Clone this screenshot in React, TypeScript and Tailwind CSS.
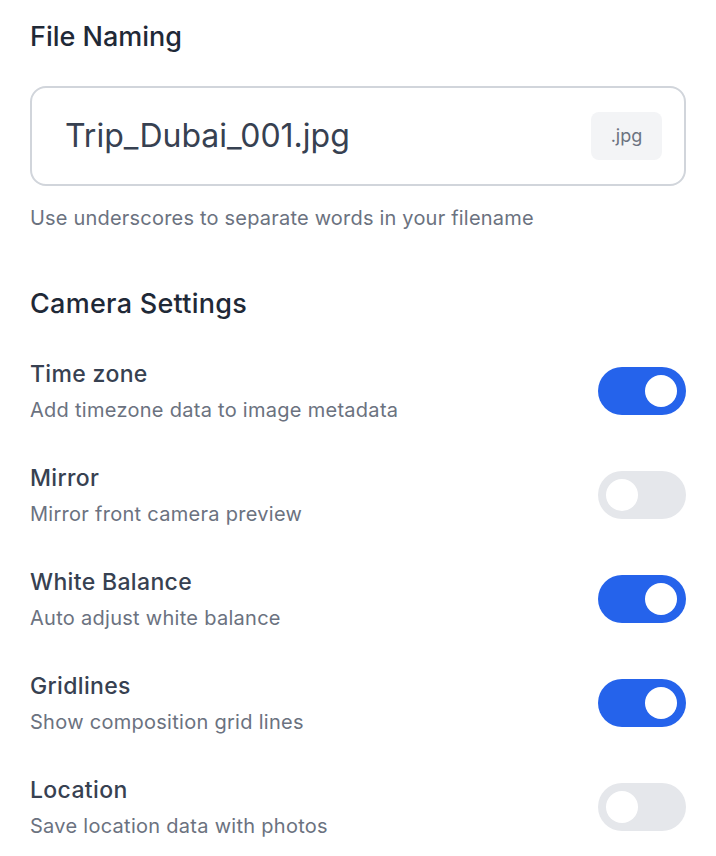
import React, { useState } from 'react';

interface Setting {
   id: string;
   title: string;
   description: string;
   enabled: boolean;
}

const initialSettings: Setting[] = [
   { id: 'timezone', title: 'Time zone', description: 'Add timezone data to image metadata', enabled: true },
   { id: 'mirror', title: 'Mirror', description: 'Mirror front camera preview', enabled: false },
   { id: 'wb', title: 'White Balance', description: 'Auto adjust white balance', enabled: true },
   { id: 'grid', title: 'Gridlines', description: 'Show composition grid lines', enabled: true },
   { id: 'location', title: 'Location', description: 'Save location data with photos', enabled: false },
];

const Toggle: React.FC<{ on: boolean; onClick: () => void }> = ({ on, onClick }) => (
   <button
      type="button"
      onClick={onClick}
      className={`relative w-[88px] h-12 shrink-0 rounded-full transition-colors ${on ? 'bg-[#2563eb]' : 'bg-[#e5e7eb]'}`}
   >
      <span
         className={`absolute top-2 left-2 w-8 h-8 rounded-full bg-white transition-transform ${on ? 'translate-x-[39px]' : 'translate-x-0'}`}
      />
   </button>
);

const App: React.FC = () => {
   const [name, setName] = useState('Trip_Dubai_001.jpg');
   const [settings, setSettings] = useState<Setting[]>(initialSettings);

   const toggle = (id: string) => {
      setSettings(prev => prev.map(s => (s.id === id ? { ...s, enabled: !s.enabled } : s)));
   };

   return (
      <div className="min-h-screen bg-white px-[30px] pt-[19px] font-['Inter',sans-serif]">
         {/* File naming */}
         <h2 className="text-[27px] leading-9 font-medium text-[#1f2937]">File Naming</h2>
         <div className="mt-[31px] flex items-center h-[100px] rounded-2xl border-2 border-[#d1d5db] pl-[33px] pr-[22px]">
            <input
               value={name}
               onChange={e => setName(e.target.value)}
               className="flex-1 min-w-0 bg-transparent outline-none text-[32px] text-[#374151]"
            />
            <span className="flex items-center justify-center w-[71px] h-12 rounded-lg bg-[#f3f4f6] text-lg text-[#6b7280]">
               .jpg
            </span>
         </div>
         <p className="mt-[18px] text-xl leading-7 tracking-[0.01em] text-[#6b7280]">Use underscores to separate words in your filename</p>

         {/* Camera settings */}
         <h2 className="mt-[54px] text-[27px] leading-9 font-medium tracking-[0.01em] text-[#1f2937]">Camera Settings</h2>
         <div className="mt-9 flex flex-col gap-[38px]">
            {settings.map(s => (
               <div key={s.id} className="flex items-center justify-between">
                  <div>
                     <p className="text-[23px] leading-8 font-medium tracking-[0.015em] text-[#374151]">{s.title}</p>
                     <p className="mt-1.5 text-xl leading-7 tracking-[0.014em] text-[#6b7280]">{s.description}</p>
                  </div>
                  <Toggle on={s.enabled} onClick={() => toggle(s.id)} />
               </div>
            ))}
         </div>
      </div>
   );
};

export default App;
